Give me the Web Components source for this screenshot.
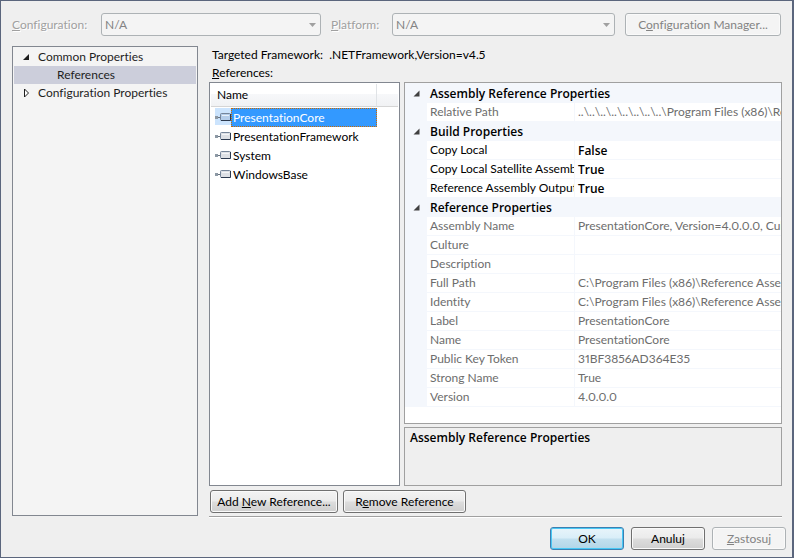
<!DOCTYPE html>
<html lang="en">
<head>
<meta charset="utf-8">
<title>Property Pages</title>
<style>
    html, body{
        height:100%;
        margin:0;
    }
    body{
        background:#efefef;
        color:#000;
        font:12px/18px Lato, "Open Sans", sans-serif;
        font-variant-ligatures:none;
        font-variant-numeric:proportional-nums;
    }
</style>
</head>
<body>
<property-pages>
    <combo-box slot="top" label="Configuration:" key="C" value="N/A" class="config"></combo-box>
    <combo-box slot="top" label="Platform:" key="P" value="N/A" class="platform"></combo-box>
    <push-button slot="top" class="manager" disabled>C<u>o</u>nfiguration Manager...</push-button>

    <page-tree slot="tree">
        <tree-node state="open">Common Properties</tree-node>
        <tree-node level="2" selected>References</tree-node>
        <tree-node state="closed">Configuration Properties</tree-node>
    </page-tree>

    <span slot="framework">Targeted Framework:&nbsp; .NETFramework,Version=v4.5</span>
    <reference-list slot="list"></reference-list>
    <property-grid slot="grid"></property-grid>
    <span slot="help">Assembly Reference Properties</span>

    <push-button slot="edit" class="add">Add <u>N</u>ew Reference...</push-button>
    <push-button slot="edit" class="remove">R<u>e</u>move Reference</push-button>

    <push-button slot="actions" primary>OK</push-button>
    <push-button slot="actions">Anuluj</push-button>
    <push-button slot="actions" disabled><u>Z</u>astosuj</push-button>
</property-pages>

<script>
function makeTemplate(html){
    let template = document.createElement('template');
    template.innerHTML = html;
    return template;
}

class BaseElement extends HTMLElement{
    constructor(){
        super();
        this.attachShadow({mode:'open'});
        this.shadowRoot.appendChild(this.constructor.template.content.cloneNode(true));
    }
    $(selector){
        return this.shadowRoot.querySelector(selector);
    }
}

customElements.define('push-button', class extends BaseElement{
    static template = makeTemplate(`
<style>
    :host{
        display:block;
        min-width:74px;
    }
    button{
        box-sizing:border-box;
        width:100%;
        height:23px;
        padding:0 4px;
        border:1px solid #707070;
        border-radius:3px;
        background:linear-gradient(#f3f3f3, #ebebeb 48%, #dddddd 52%, #cfcfcf);
        box-shadow:inset 0 0 0 1px #fafafa;
        color:#000;
        font:inherit;
        white-space:nowrap;
    }
    :host([primary]) button{
        border-color:#3c7fb1;
        background:linear-gradient(#e8f4fa, #d9eef8 48%, #c2e0ef 52%, #b2d6e8);
        box-shadow:inset 0 0 0 1px #48c8f5;
    }
    button:disabled{
        border-color:#adb2b5;
        background:#f4f4f4;
        box-shadow:inset 0 0 0 1px #fafafa;
        color:#838383;
    }
</style>
<button type="button"><slot></slot></button>`);
    connectedCallback(){
        this.$('button').disabled = this.hasAttribute('disabled');
    }
});

customElements.define('combo-box', class extends BaseElement{
    static template = makeTemplate(`
<style>
    :host{
        display:flex;
        flex:1;
        align-items:center;
    }
    label{
        width:var(--label-width, 89px);
        color:#a0a0a0;
        text-shadow:1px 1px #fff;
    }
    .field{
        position:relative;
        flex:1;
    }
    select{
        display:block;
        box-sizing:border-box;
        width:100%;
        height:23px;
        padding:0 3px;
        border:1px solid #adb2b5;
        border-radius:3px;
        background:#f4f4f4;
        color:#838383;
        font:inherit;
        opacity:1;
        appearance:none;
    }
    svg{
        position:absolute;
        right:5px;
        top:10px;
    }
</style>
<label for="select"><u></u><span></span></label>
<div class="field">
    <select id="select" disabled><option></option></select>
    <svg width="7" height="4"><path d="M0 0h7L3.5 4z" fill="#a0a0a0"/></svg>
</div>`);
    connectedCallback(){
        let key = this.getAttribute('key');
        this.$('u').textContent = key;
        this.$('span').textContent = this.getAttribute('label').slice(key.length);
        this.$('option').textContent = this.getAttribute('value');
    }
});

customElements.define('page-tree', class extends BaseElement{
    static template = makeTemplate(`
<style>
    :host{
        display:block;
        box-sizing:border-box;
        padding:1px;
        border:1px solid #828790;
        background:#f4f4f4;
    }
</style>
<div role="tree"><slot></slot></div>`);
});

customElements.define('tree-node', class extends BaseElement{
    static template = makeTemplate(`
<style>
    :host{
        display:flex;
        align-items:center;
        height:18px;
        color:#1e1e1e;
        white-space:nowrap;
    }
    :host([selected]){
        background:#cccedb;
    }
    svg{
        flex:none;
        width:8px;
        height:10px;
        margin:0 8px;
    }
    path{
        display:none;
    }
    :host([level="2"]) svg{
        margin-right:27px;
    }
    :host([state="open"]) .open,
    :host([state="closed"]) .closed{
        display:block;
    }
</style>
<svg viewBox="0 0 8 10">
    <path class="open" d="M7 2v6H1z" fill="#1e1e1e"/>
    <path class="closed" d="M2.5 1v8l4-4z" fill="#fff" stroke="#1e1e1e"/>
</svg>
<slot></slot>`);
    connectedCallback(){
        this.setAttribute('role', 'treeitem');
    }
});

customElements.define('reference-list', class extends BaseElement{
    static template = makeTemplate(`
<style>
    :host{
        display:block;
        box-sizing:border-box;
        padding:1px;
        border:1px solid #828790;
        background:#fff;
    }
    table{
        width:100%;
        border-collapse:separate;
        border-spacing:0;
        table-layout:fixed;
    }
    .rest{
        width:21px;
    }
    th{
        height:22px;
        padding:0 0 0 6px;
        border-bottom:1px solid #d5d5d5;
        background:linear-gradient(#fff 45%, #f7f8fa 45%, #f1f2f4);
        font-weight:normal;
        text-align:left;
    }
    th:first-child{
        border-right:1px solid #e0e3e6;
    }
    td{
        height:19px;
        padding:0;
    }
    tr.gap td{
        height:1px;
    }
    .item{
        display:flex;
        height:19px;
        padding-left:4px;
    }
    svg{
        flex:none;
        width:16px;
        height:17px;
    }
    .item span{
        flex:1;
        padding:0 1px;
        border:1px solid transparent;
        line-height:17px;
    }
    .selected svg{
        background:#cce4fd;
    }
    .selected span{
        border:1px dotted #cc6a00;
        background:#3399ff;
        color:#fff;
    }
</style>
<table>
    <colgroup><col><col class="rest"></colgroup>
    <thead><tr><th>Name</th><th></th></tr></thead>
    <tbody></tbody>
</table>`);
    connectedCallback(){
        let names = ['PresentationCore', 'PresentationFramework', 'System', 'WindowsBase'];
        this.$('tbody').innerHTML = '<tr class="gap"><td></td><td></td></tr>' + names.map((name, i)=>`
            <tr><td><div class="item ${i === 0?'selected':''}">
                <svg viewBox="0 0 16 17">
                    <path d="M0 8h3v3H0z" fill="#8d99a5"/>
                    <path d="M3 9h2v1H3z" fill="#66727f"/>
                    <rect x="5.5" y="5.5" width="10" height="7" rx="1" fill="${i === 0?'#b4cdea':'#dde0e5'}" stroke="#75859a"/>
                    <path d="M6 12.5h9.5V6" fill="none" stroke="#2c3a50"/>
                    <path d="M7 7.5h7" stroke="#fff" opacity=".7"/>
                </svg><span>${name}</span>
            </div></td><td></td></tr>`).join('');
    }
});

customElements.define('property-grid', class extends BaseElement{
    static template = makeTemplate(`
<style>
    :host{
        display:block;
        box-sizing:border-box;
        overflow:hidden;
        border:1px solid #a0a0a0;
        background:#fff;
    }
    table{
        width:100%;
        border-top:1px solid #f4f7fc;
        border-collapse:separate;
        border-spacing:0;
        table-layout:fixed;
    }
    .gutter{
        width:22px;
    }
    .name{
        width:148px;
    }
    th, td{
        box-sizing:border-box;
        height:19px;
        padding:0 0 0 3px;
        border-bottom:1px solid #f4f7fc;
        overflow:hidden;
        font-weight:normal;
        text-align:left;
        white-space:nowrap;
    }
    th{
        border-right:1px solid #f4f7fc;
    }
    .edge, .group th{
        padding:0;
        border-right:0;
        background:#f4f7fc;
    }
    .group th{
        padding-left:3px;
    }
    .readonly{
        color:#6d6d6d;
    }
    .group th, .editable td{
        font-family:"Open Sans", sans-serif;
        font-weight:600;
        line-height:17px;
    }
    svg{
        display:block;
        margin-left:8px;
    }
</style>
<table>
    <colgroup><col class="gutter"><col class="name"><col></colgroup>
    <tbody></tbody>
</table>`);
    groups = [
        ['Assembly Reference Properties', 'readonly', [
            ['Relative Path', '..\\..\\..\\..\\..\\..\\..\\..\\Program Files (x86)\\Reference Assemblies']
        ]],
        ['Build Properties', 'editable', [
            ['Copy Local', 'False'],
            ['Copy Local Satellite Assemblies', 'True'],
            ['Reference Assembly Output', 'True']
        ]],
        ['Reference Properties', 'readonly', [
            ['Assembly Name', 'PresentationCore, Version=4.0.0.0, Culture=neutral'],
            ['Culture', ''],
            ['Description', ''],
            ['Full Path', 'C:\\Program Files (x86)\\Reference Assemblies'],
            ['Identity', 'C:\\Program Files (x86)\\Reference Assemblies'],
            ['Label', 'PresentationCore'],
            ['Name', 'PresentationCore'],
            ['Public Key Token', '31BF3856AD364E35'],
            ['Strong Name', 'True'],
            ['Version', '4.0.0.0']
        ]]
    ];
    connectedCallback(){
        let html = '';
        for(let [title, kind, rows] of this.groups){
            html += `<tr class="group"><td class="edge"><svg width="7" height="7"><path d="M6.5 .5v6h-6z" fill="#404040"/></svg></td><th colspan="2">${title}</th></tr>`;
            for(let [name, value] of rows){
                html += `<tr class="${kind}"><td class="edge"></td><th scope="row">${name}</th><td>${value}</td></tr>`;
            }
        }
        this.$('tbody').innerHTML = html;
    }
});

customElements.define('property-pages', class extends BaseElement{
    static template = makeTemplate(`
<style>
    :host{
        display:flex;
        flex-direction:column;
        box-sizing:border-box;
        min-height:100%;
        height:100%;
        padding:12px 10px 7px 11px;
        border:1px solid #5b667d;
        border-right-width:2px;
    }
    .top{
        display:flex;
        align-items:center;
        gap:10px;
        padding:0 1px 10px 0;
    }
    ::slotted(.platform){
        --label-width:61px;
        flex:0 1 284px;
    }
    ::slotted(.manager){
        width:156px;
    }
    .main{
        display:flex;
        flex:1;
        gap:11px;
        min-height:0;
    }
    ::slotted(page-tree){
        flex:none;
        width:186px;
        margin-bottom:2px;
    }
    .page{
        display:flex;
        flex:1;
        flex-direction:column;
        min-width:0;
    }
    .caption{
        padding-left:3px;
    }
    .columns{
        display:flex;
        flex:1;
        gap:4px;
        min-height:0;
    }
    ::slotted(reference-list){
        flex:none;
        width:191px;
    }
    .details{
        display:flex;
        flex:1;
        flex-direction:column;
        gap:3px;
        min-width:0;
    }
    ::slotted(property-grid){
        flex:1;
        min-height:0;
    }
    .help{
        box-sizing:border-box;
        height:59px;
        padding:1px 5px;
        border:1px solid #a0a0a0;
        font-family:"Open Sans", sans-serif;
        font-weight:600;
    }
    .edit{
        display:flex;
        gap:5px;
        padding:4px 1px 3px;
    }
    ::slotted(.add){
        width:128px;
    }
    ::slotted(.remove){
        width:123px;
    }
    hr{
        width:100%;
        margin:0;
        border:0;
        border-top:1px solid #a0a0a0;
        border-bottom:1px solid #fff;
    }
    .actions{
        display:flex;
        justify-content:flex-end;
        gap:7px;
        margin-right:-4px;
        padding-top:9px;
    }
</style>
<div class="top"><slot name="top"></slot></div>
<div class="main">
    <slot name="tree"></slot>
    <div class="page">
        <div class="caption"><slot name="framework"></slot></div>
        <div class="caption"><u>R</u>eferences:</div>
        <div class="columns">
            <slot name="list"></slot>
            <div class="details">
                <slot name="grid"></slot>
                <div class="help"><slot name="help"></slot></div>
            </div>
        </div>
        <div class="edit"><slot name="edit"></slot></div>
        <hr>
    </div>
</div>
<div class="actions"><slot name="actions"></slot></div>`);
});
</script>
</body>
</html>
